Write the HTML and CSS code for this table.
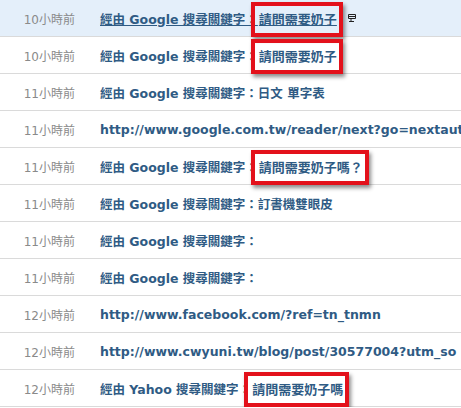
FILE: index.html
```html
<!DOCTYPE html>
<html lang="zh-Hant">
<head>
  <meta charset="UTF-8">
  <title>來源關鍵字</title>
  <link rel="stylesheet" href="styles.css">
</head>
<body>
  <ul class="refs">
    <li class="row active">
      <span class="time"><b>10</b>小時前</span>
      <a class="ref" href="#">經由 Google 搜尋關鍵字：<span class="mark">請問需要奶子</span></a>
      <svg class="pop" width="10" height="8" viewBox="0 0 10 8" aria-hidden="true"><path d="M1.5 0.5h7v4h-7z M1.5 2.5h7 M4 4.5v3 M2 7.5h5" fill="none" stroke="#222" stroke-width="1"/></svg>
    </li>
    <li class="row">
      <span class="time"><b>10</b>小時前</span>
      <a class="ref" href="#">經由 Google 搜尋關鍵字：<span class="mark">請問需要奶子</span></a>
    </li>
    <li class="row">
      <span class="time"><b>11</b>小時前</span>
      <a class="ref" href="#">經由 Google 搜尋關鍵字：日文 單字表</a>
    </li>
    <li class="row">
      <span class="time"><b>11</b>小時前</span>
      <a class="ref" href="#">http://www.google.com.tw/reader/next?go=nextauto</a>
    </li>
    <li class="row">
      <span class="time"><b>11</b>小時前</span>
      <a class="ref" href="#">經由 Google 搜尋關鍵字：<span class="mark">請問需要奶子嗎？</span></a>
    </li>
    <li class="row">
      <span class="time"><b>11</b>小時前</span>
      <a class="ref" href="#">經由 Google 搜尋關鍵字：訂書機雙眼皮</a>
    </li>
    <li class="row">
      <span class="time"><b>11</b>小時前</span>
      <a class="ref" href="#">經由 Google 搜尋關鍵字：</a>
    </li>
    <li class="row">
      <span class="time"><b>11</b>小時前</span>
      <a class="ref" href="#">經由 Google 搜尋關鍵字：</a>
    </li>
    <li class="row">
      <span class="time"><b>12</b>小時前</span>
      <a class="ref" href="#">http://www.facebook.com/?ref=tn_tnmn</a>
    </li>
    <li class="row">
      <span class="time"><b>12</b>小時前</span>
      <a class="ref" href="#">http://www.cwyuni.tw/blog/post/30577004?utm_so</a>
    </li>
    <li class="row">
      <span class="time"><b>12</b>小時前</span>
      <a class="ref" href="#">經由 Yahoo 搜尋關鍵字：<span class="mark">請問需要奶子嗎</span></a>
    </li>
  </ul>
</body>
</html>
```

FILE: styles.css
```css
body {
  margin: 0;
  background: #fff;
  overflow: hidden;
  font-family: "DejaVu Sans", "Noto Sans CJK TC", sans-serif;
}

.refs {
  list-style: none;
  margin: 0;
  padding: 0;
}

.row {
  display: flex;
  align-items: center;
  height: 36px;
  border-bottom: 1px solid #dadada;
  white-space: nowrap;
}

.row.active {
  background: #e4effa;
}

.time {
  width: 75px;
  flex: none;
  text-align: right;
  color: #8a8a8a;
  font-size: 12px;
  margin-right: 25px;
}

.time b {
  font-weight: normal;
}

.ref {
  color: #2f5b84;
  font-weight: bold;
  font-size: 12.5px;
  text-decoration: none;
}

.row.active .ref {
  text-decoration: underline;
}

.mark {
  font-size: 13px;
  border: 4px solid #e3111b;
  padding: 6px 2px 6px 4px;
  margin: 0 -6px 0 -7px;
  box-shadow: 2px 3px 4px rgba(0, 0, 0, 0.45);
}

.pop {
  margin-left: 10px;
}
```
